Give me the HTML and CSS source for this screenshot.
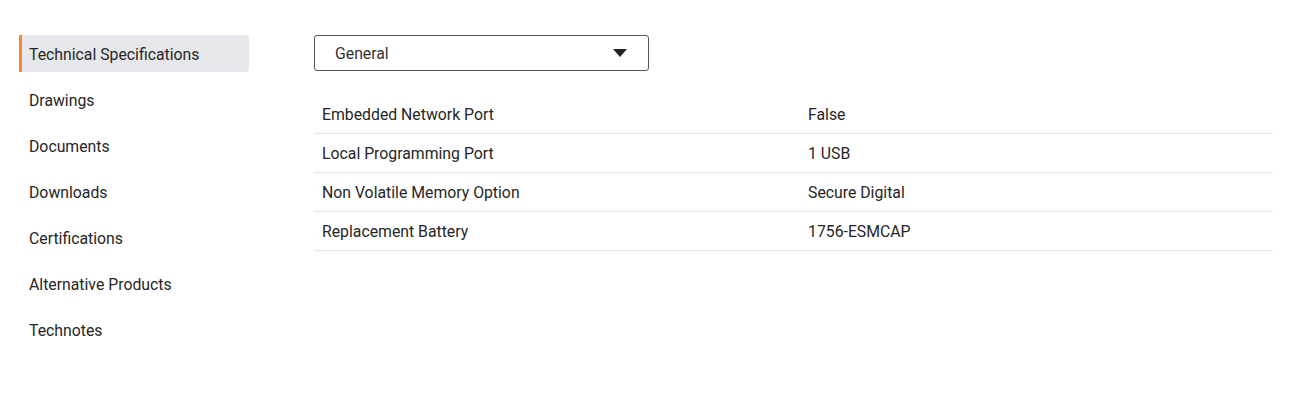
FILE: index.html
```html
<!DOCTYPE html>
<html lang="en">
<head>
  <meta charset="UTF-8">
  <title>Product Details</title>
  <link rel="stylesheet" href="styles.css">
</head>
<body>
  <div class="page">
    <nav class="side-nav">
      <a class="nav-item active" href="#">Technical Specifications</a>
      <a class="nav-item" href="#">Drawings</a>
      <a class="nav-item" href="#">Documents</a>
      <a class="nav-item" href="#">Downloads</a>
      <a class="nav-item" href="#">Certifications</a>
      <a class="nav-item" href="#">Alternative Products</a>
      <a class="nav-item" href="#">Technotes</a>
    </nav>
    <main class="specs">
      <div class="select-box">
        <span>General</span>
        <svg class="caret" width="14" height="8" viewBox="0 0 14 8"><path d="M0 0h14L7 8z" fill="#222"/></svg>
      </div>
      <table class="spec-table">
        <tr><td>Embedded Network Port</td><td>False</td></tr>
        <tr><td>Local Programming Port</td><td>1 USB</td></tr>
        <tr><td>Non Volatile Memory Option</td><td>Secure Digital</td></tr>
        <tr><td>Replacement Battery</td><td>1756-ESMCAP</td></tr>
      </table>
    </main>
  </div>
</body>
</html>
```

FILE: styles.css
```css
/* base */
body {
  margin: 0;
  font-family: 'Roboto', 'Liberation Sans', sans-serif;
  font-size: 15.8px;
  color: #262626;
  background: #ffffff;
}

.page {
  display: flex;
  padding: 35px 28px 0 19px;
}

/* sidebar */
.side-nav {
  width: 230px;
  display: flex;
  flex-direction: column;
  gap: 9px;
  flex-shrink: 0;
}

.nav-item {
  display: block;
  height: 35px;
  line-height: 35px;
  padding: 2px 0 0 10px;
  color: #262626;
  text-decoration: none;
  border-radius: 0 4px 4px 0;
}

.nav-item.active {
  background: #e6e7ea;
  border-left: 3px solid #f0873a;
  padding-left: 7px;
}

/* main */
.specs {
  flex: 1;
  margin-left: 65px;
}

.select-box {
  width: 292px;
  height: 34px;
  border: 1px solid #555;
  border-radius: 3px;
  display: flex;
  align-items: center;
  justify-content: space-between;
  padding: 0 21px 0 20px;
}

.select-box span {
  color: #333;
}

.spec-table {
  width: 100%;
  border-collapse: collapse;
  margin-top: 24px;
}

.spec-table td {
  height: 38px;
  padding: 0 8px;
  border-bottom: 1px solid #e4e4e4;
  vertical-align: middle;
}

.spec-table td:first-child {
  width: 470px;
}
```
